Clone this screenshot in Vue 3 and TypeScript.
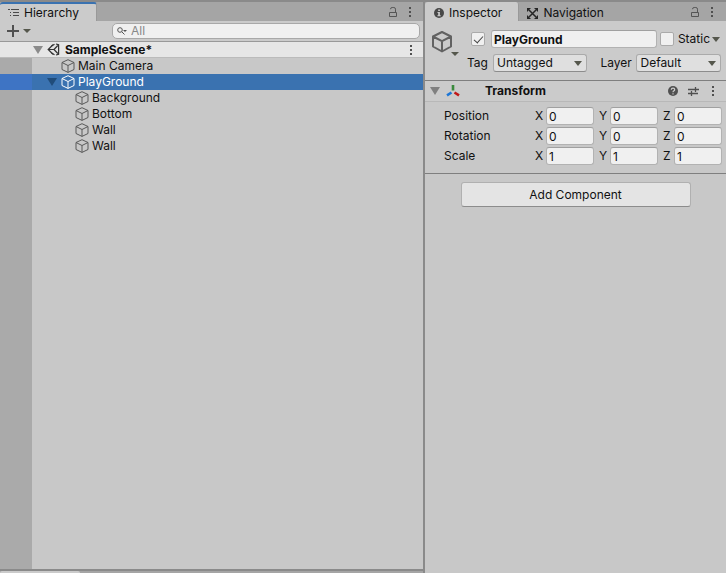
<script setup lang="ts">
import { reactive, ref } from 'vue'

interface TreeItem {
  id: number
  name: string
  depth: number
  open?: boolean
}

const items: TreeItem[] = [
  { id: 1, name: 'Main Camera', depth: 0 },
  { id: 2, name: 'PlayGround', depth: 0, open: true },
  { id: 3, name: 'Background', depth: 1 },
  { id: 4, name: 'Bottom', depth: 1 },
  { id: 5, name: 'Wall', depth: 1 },
  { id: 6, name: 'Wall', depth: 1 },
]

const selected = ref(2)
const search = ref('')
const active = ref(true)
const isStatic = ref(false)
const objectName = ref('PlayGround')
const tag = ref('Untagged')
const layer = ref('Default')

const axes = ['X', 'Y', 'Z']
const vectors = reactive([
  { label: 'Position', values: ['0', '0', '0'] },
  { label: 'Rotation', values: ['0', '0', '0'] },
  { label: 'Scale', values: ['1', '1', '1'] },
])
</script>

<template>
  <main class="editor">
    <div class="left">
      <section class="hierarchy" aria-label="Hierarchy">
        <header class="tabs">
          <button class="tab tab-focused tab-hierarchy">
            <svg width="12" height="12" viewBox="0 0 12 12" fill="none" stroke="#4a4a4a">
              <path d="M0 2.5h2M3 2.5h8M2 5.5h1M5 5.5h6M2 8.5h1M5 8.5h6" />
            </svg>
            Hierarchy
          </button>
          <span class="spacer"></span>
          <button class="icon-btn" aria-label="Lock">
            <svg width="10" height="12" viewBox="0 0 10 12" fill="none" stroke="#555">
              <path d="M1.500 6.500h7v4h-7zM7.500 6V3.200Q7.500 1.500 5.800 1.500H4.200Q2.500 1.500 2.500 3.200" />
            </svg>
          </button>
          <button class="icon-btn dots" aria-label="Panel menu"><i></i><i></i><i></i></button>
        </header>

        <div class="toolbar">
          <button class="add" aria-label="Create">
            <svg width="26" height="14" viewBox="0 0 26 14">
              <path d="M7 1v12M1 7h12" stroke="#505050" stroke-width="2" />
              <path d="M17 5h8l-4 4z" fill="#55574c" />
            </svg>
          </button>
          <label class="search">
            <svg width="12" height="10" viewBox="0 0 12 10" fill="none" stroke="#555">
              <circle cx="3" cy="4" r="2.300" />
              <path d="M4.800 5.800l2.700 2.700" />
              <path d="M6 4h4l-2 2z" fill="#555" stroke="none" />
            </svg>
            <input v-model="search" type="text" placeholder="All" aria-label="Search hierarchy" />
          </label>
        </div>

        <div class="scene">
          <button class="fold" aria-label="Toggle scene">
            <svg width="10" height="8" viewBox="0 0 10 8"><path d="M0 0h10L5 8z" fill="#8b8b8b" /></svg>
          </button>
          <svg width="14" height="13" viewBox="0 0 14 13" fill="none" stroke="#333" stroke-width="1.200">
            <path d="M6 1.800L1.200 6.500 6 11.200M9 1l2.600.8v3.400M11.600 7.800v3.400L9 12M1.500 6.500H7M7 6.500l3.800-4M7 6.500l3.800 4" />
            <path d="M4.500 3l3-1.800M4.500 10l3 1.800M11.600 5v3" />
          </svg>
          <strong>SampleScene*</strong>
          <span class="spacer"></span>
          <button class="icon-btn dots" aria-label="Scene menu"><i></i><i></i><i></i></button>
        </div>

        <ul class="tree">
          <li
            v-for="item in items"
            :key="item.id"
            class="row"
            :class="{ selected: item.id === selected, child: item.depth === 1 }"
            @click="selected = item.id"
          >
            <span class="gutter"></span>
            <span class="node">
              <span class="fold">
                <svg v-if="item.open" width="10" height="8" viewBox="0 0 10 8">
                  <path d="M0 0h10L5 8z" fill="#204c7a" />
                </svg>
              </span>
              <svg class="cube" width="14" height="14" viewBox="0 0 14 14" fill="none" stroke="currentColor">
                <path d="M7 .7l6 2.800v7L7 13.400l-6-2.900v-7zM1 3.500l6 3 6-3M7 6.500v6.900" />
              </svg>
              <span>{{ item.name }}</span>
            </span>
          </li>
        </ul>
        <div class="rest"><span class="gutter"></span></div>
      </section>
      <div class="dock"><span class="dock-tab"></span></div>
    </div>

    <section class="inspector" aria-label="Inspector">
      <header class="tabs">
        <button class="tab tab-inspector">
          <svg width="10" height="10" viewBox="0 0 10 10">
            <circle cx="5" cy="5" r="5" fill="#484848" />
            <path d="M4.200 1.500h1.700v1.500H4.200zM3.500 4h2.400v3.200h.8v1.100H3.400V7.200h.8V5h-.7z" fill="#cbcbcb" />
          </svg>
          Inspector
        </button>
        <button class="tab tab-idle">
          <svg width="11" height="11" viewBox="0 0 11 11">
            <path d="M2 2l7 7M9 2L2 9" stroke="#252525" stroke-width="1.500" />
            <path d="M0 0h4L0 4zM11 0v4L7 0zM0 11V7l4 4zM11 11H7l4-4z" fill="#252525" />
          </svg>
          Navigation
        </button>
        <span class="spacer"></span>
        <button class="icon-btn" aria-label="Lock">
          <svg width="10" height="12" viewBox="0 0 10 12" fill="none" stroke="#555">
            <path d="M1.500 6.500h7v4h-7zM7.500 6V3.200Q7.500 1.500 5.800 1.500H4.200Q2.500 1.500 2.500 3.200" />
          </svg>
        </button>
        <button class="icon-btn dots" aria-label="Panel menu"><i></i><i></i><i></i></button>
      </header>

      <div class="object">
        <button class="object-icon" aria-label="Select icon">
          <svg width="28" height="28" viewBox="0 0 28 28" fill="none" stroke="#626262" stroke-width="2" stroke-linejoin="round">
            <path d="M11 2l9 4.500v10L11 21.500l-9-5v-10zM2 6.500l9 4.700 9-4.700M11 11.200v10.300" />
            <path d="M20 22h8l-4 4z" fill="#55574c" stroke="none" />
          </svg>
        </button>
        <div class="object-fields">
          <div class="line">
            <input v-model="active" class="check" type="checkbox" aria-label="Active" />
            <input v-model="objectName" class="field name" type="text" aria-label="Name" />
            <input id="static" v-model="isStatic" class="check" type="checkbox" />
            <label class="static" for="static">Static</label>
            <button class="static-menu" aria-label="Static options">
              <svg width="8" height="5" viewBox="0 0 8 5"><path d="M0 0h8L4 5z" fill="#55574c" /></svg>
            </button>
          </div>
          <div class="line">
            <label class="tag-label" for="tag">Tag</label>
            <span class="select tag">
              <select id="tag" v-model="tag">
                <option>Untagged</option>
                <option>Player</option>
              </select>
              <svg width="8" height="5" viewBox="0 0 8 5"><path d="M0 0h8L4 5z" fill="#55574c" /></svg>
            </span>
            <label class="layer-label" for="layer">Layer</label>
            <span class="select layer">
              <select id="layer" v-model="layer">
                <option>Default</option>
                <option>UI</option>
              </select>
              <svg width="8" height="5" viewBox="0 0 8 5"><path d="M0 0h8L4 5z" fill="#55574c" /></svg>
            </span>
          </div>
        </div>
      </div>

      <section class="component">
        <header class="component-head">
          <button class="fold" aria-label="Toggle Transform">
            <svg width="10" height="8" viewBox="0 0 10 8"><path d="M0 0h10L5 8z" fill="#808080" /></svg>
          </button>
          <svg class="axes-icon" width="14" height="14" viewBox="0 0 14 14" fill="none" stroke-width="2.600">
            <path d="M7 1v5.500" stroke="#3a8a3c" />
            <path d="M5.500 8.500L1 11.300" stroke="#1c76d6" />
            <path d="M8.500 8.500L13 11.300" stroke="#c01818" />
          </svg>
          <h2>Transform</h2>
          <span class="spacer"></span>
          <button class="icon-btn" aria-label="Help">
            <svg width="10" height="10" viewBox="0 0 10 10" fill="none">
              <circle cx="5" cy="5" r="5" fill="#505050" />
              <path d="M3.300 3.800Q3.300 2.200 5 2.200T6.700 3.700Q6.700 4.500 5.800 4.900 5 5.200 5 6.200M5 7.200v1.300" stroke="#cbcbcb" stroke-width="1.200" />
            </svg>
          </button>
          <button class="icon-btn" aria-label="Presets">
            <svg width="11" height="10" viewBox="0 0 11 10" fill="none" stroke="#505050">
              <path d="M0 3.500h7M8 3.500h3M0 7.500h3M4 7.500h6" stroke-width="1.300" />
              <path d="M7.500 1v5M3.500 5v5" stroke-width="1.300" />
            </svg>
          </button>
          <button class="icon-btn dots" aria-label="Component menu"><i></i><i></i><i></i></button>
        </header>
        <div class="vectors">
          <div v-for="vector in vectors" :key="vector.label" class="vector" role="group" :aria-label="vector.label">
            <span class="vector-label">{{ vector.label }}</span>
            <label v-for="(axis, i) in axes" :key="axis" class="axis">
              <span>{{ axis }}</span>
              <input v-model="vector.values[i]" class="field" type="text" />
            </label>
          </div>
        </div>
      </section>

      <button class="add-component">Add Component</button>
    </section>
  </main>
</template>

<style>
body {
  background: #c8c8c8;
}
</style>

<style scoped>
.editor {
  display: grid;
  grid-template-columns: 423fr 301fr;
  gap: 2px;
  box-sizing: border-box;
  min-height: 100vh;
  padding-top: 2px;
  background: #8a8a8a;
  color: #111;
  font: 12px/16px Inter, "Liberation Sans", sans-serif;
}

button,
input,
select {
  box-sizing: border-box;
  margin: 0;
  padding: 0;
  border: 0;
  background: none;
  color: inherit;
  font: inherit;
}

svg {
  display: block;
  flex: none;
}

.spacer {
  flex: 1;
}

.left {
  display: flex;
  flex-direction: column;
  min-width: 0;
}

.hierarchy {
  display: flex;
  flex: 1;
  flex-direction: column;
  background: #c8c8c8;
}

.tabs {
  display: flex;
  align-items: center;
  height: 19px;
  padding-right: 10px;
  background: #a5a5a5;
}

.hierarchy .tabs {
  padding-right: 9px;
}

.tab {
  display: flex;
  align-items: center;
  height: 19px;
  padding-top: 3px;
  background: #cbcbcb;
  border-right: 1px solid #999;
  border-radius: 3px 3px 0 0;
}

.tab-focused {
  padding-top: 1px;
  border-top: 2px solid #3a72b0;
}

.tab-hierarchy {
  gap: 4px;
  padding-left: 8px;
  padding-right: 17px;
}

.tab-inspector {
  gap: 5px;
  padding-left: 9px;
  padding-right: 16px;
}

.tab-idle {
  gap: 5px;
  padding-left: 8px;
  background: none;
  border: 0;
}

.icon-btn {
  display: flex;
  align-items: center;
  justify-content: center;
  height: 16px;
}

.dots {
  flex-direction: column;
  gap: 2px;
  width: 8px;
  margin-left: 8px;
}

.dots i {
  width: 2px;
  height: 2px;
  background: #505050;
}

.toolbar {
  display: flex;
  align-items: center;
  gap: 80px;
  height: 20px;
  padding: 0 3px 0 6px;
  border-bottom: 1px solid #999;
  background: #cbcbcb;
}

.search {
  display: flex;
  flex: 1;
  align-items: center;
  gap: 2px;
  box-sizing: border-box;
  height: 16px;
  padding-left: 4px;
  border: 1px solid #a8a8a8;
  border-radius: 5px;
  background: #f0f0f0;
}

.search input {
  flex: 1;
  min-width: 0;
  height: 14px;
  outline: 0;
}

.search input::placeholder {
  color: #888;
  opacity: 1;
}

.scene {
  display: flex;
  align-items: center;
  height: 15px;
  padding: 0 8px 0 32px;
  border-bottom: 1px solid #bbb;
  background: #e6e6e6;
}

.scene strong {
  margin-left: 4px;
  font-weight: 700;
}

.fold {
  display: flex;
  justify-content: center;
  width: 12px;
}

.scene .fold {
  margin-right: 3px;
}

.tree {
  margin: 0;
  padding: 0;
  list-style: none;
}

.row {
  display: flex;
  height: 16px;
}

.gutter {
  flex: none;
  width: 32px;
  background: #aaa;
}

.node {
  display: flex;
  flex: 1;
  align-items: center;
  padding-left: 14px;
}

.node .fold {
  margin-right: 3px;
}

.child .node {
  padding-left: 28px;
}

.cube {
  margin-right: 3px;
  color: #595959;
}

.selected {
  background: #3a72b0;
  color: #fff;
}

.selected .gutter {
  background: #3e74c4;
}

.selected .cube {
  color: #fff;
}

.rest {
  display: flex;
  flex: 1;
}

.dock {
  display: flex;
  height: 2px;
  border-top: 2px solid #8a8a8a;
  background: #a5a5a5;
}

.dock-tab {
  width: 80px;
  border-radius: 2px 2px 0 0;
  background: #cbcbcb;
}

.inspector {
  display: flex;
  flex-direction: column;
  min-width: 0;
  background: #c8c8c8;
}

.object {
  display: flex;
  align-items: flex-start;
  gap: 11px;
  height: 59px;
  box-sizing: border-box;
  padding: 9px 5px 0 6px;
  background: #cbcbcb;
}

.object-icon {
  width: 28px;
}

.object-fields {
  display: flex;
  flex: 1;
  flex-direction: column;
  gap: 6px;
  min-width: 0;
  padding-left: 1px;
}

.line {
  display: flex;
  align-items: center;
  height: 18px;
}

.check {
  appearance: none;
  display: grid;
  place-items: center;
  flex: none;
  width: 14px;
  height: 14px;
  border: 1px solid #aaa;
  border-radius: 2px;
  background: #f0f0f0;
}

.check:checked::after {
  content: "";
  box-sizing: border-box;
  width: 9px;
  height: 5px;
  margin-bottom: 2px;
  border: solid #444;
  border-width: 0 0 1px 1px;
  transform: rotate(-48deg);
}

.field {
  min-width: 0;
  height: 18px;
  padding: 0 2px;
  border: 1px solid #b2b2b2;
  border-top-color: #a0a0a0;
  border-radius: 3px;
  background: #f0f0f0;
}

.name {
  flex: 1;
  margin: 0 3px 0 6px;
  font-weight: 700;
}

.static {
  margin-left: 4px;
}

.static-menu {
  margin: 0 1px 0 auto;
  padding-left: 2px;
}

.tag-label {
  width: 26px;
  margin-left: -4px;
}

.select {
  display: grid;
  flex: 95;
  align-items: center;
  min-width: 0;
}

.select.layer {
  flex: 85;
}

.layer-label {
  width: 36px;
  margin-left: 13px;
}

.select select,
.select svg {
  grid-area: 1 / 1;
}

.select select {
  appearance: none;
  width: 100%;
  height: 18px;
  padding: 0 18px 0 3px;
  border: 1px solid #aaa;
  border-bottom-color: #8c8c8c;
  border-radius: 3px;
  background: #dfdfdf;
}

.select svg {
  justify-self: end;
  margin-right: 5px;
  pointer-events: none;
}

.component {
  border-top: 1px solid #7f7f7f;
  border-bottom: 1px solid #7f7f7f;
}

.component-head {
  display: flex;
  align-items: center;
  height: 20px;
  padding: 0 9px 0 4px;
  border-bottom: 1px solid #b8b8b8;
  background: #cbcbcb;
}

.component-head .icon-btn {
  margin-left: 10px;
}

.axes-icon {
  margin-left: 5px;
}

.component-head h2 {
  margin: 0 0 0 25px;
  font: inherit;
  font-weight: 700;
}

.vectors {
  display: flex;
  flex-direction: column;
  gap: 2px;
  padding: 5px 4px 8px 19px;
}

.vector {
  display: flex;
  align-items: center;
  gap: 5px;
}

.vector-label {
  flex: 1;
}

.axis {
  display: flex;
  align-items: center;
}

.axis span {
  width: 11px;
}

.axis .field {
  width: 48px;
}

.add-component {
  align-self: center;
  width: 230px;
  height: 25px;
  margin-top: 8px;
  border: 1px solid #b0b0b0;
  border-bottom-color: #8c8c8c;
  border-radius: 3px;
  background: #e4e4e4;
}
</style>
